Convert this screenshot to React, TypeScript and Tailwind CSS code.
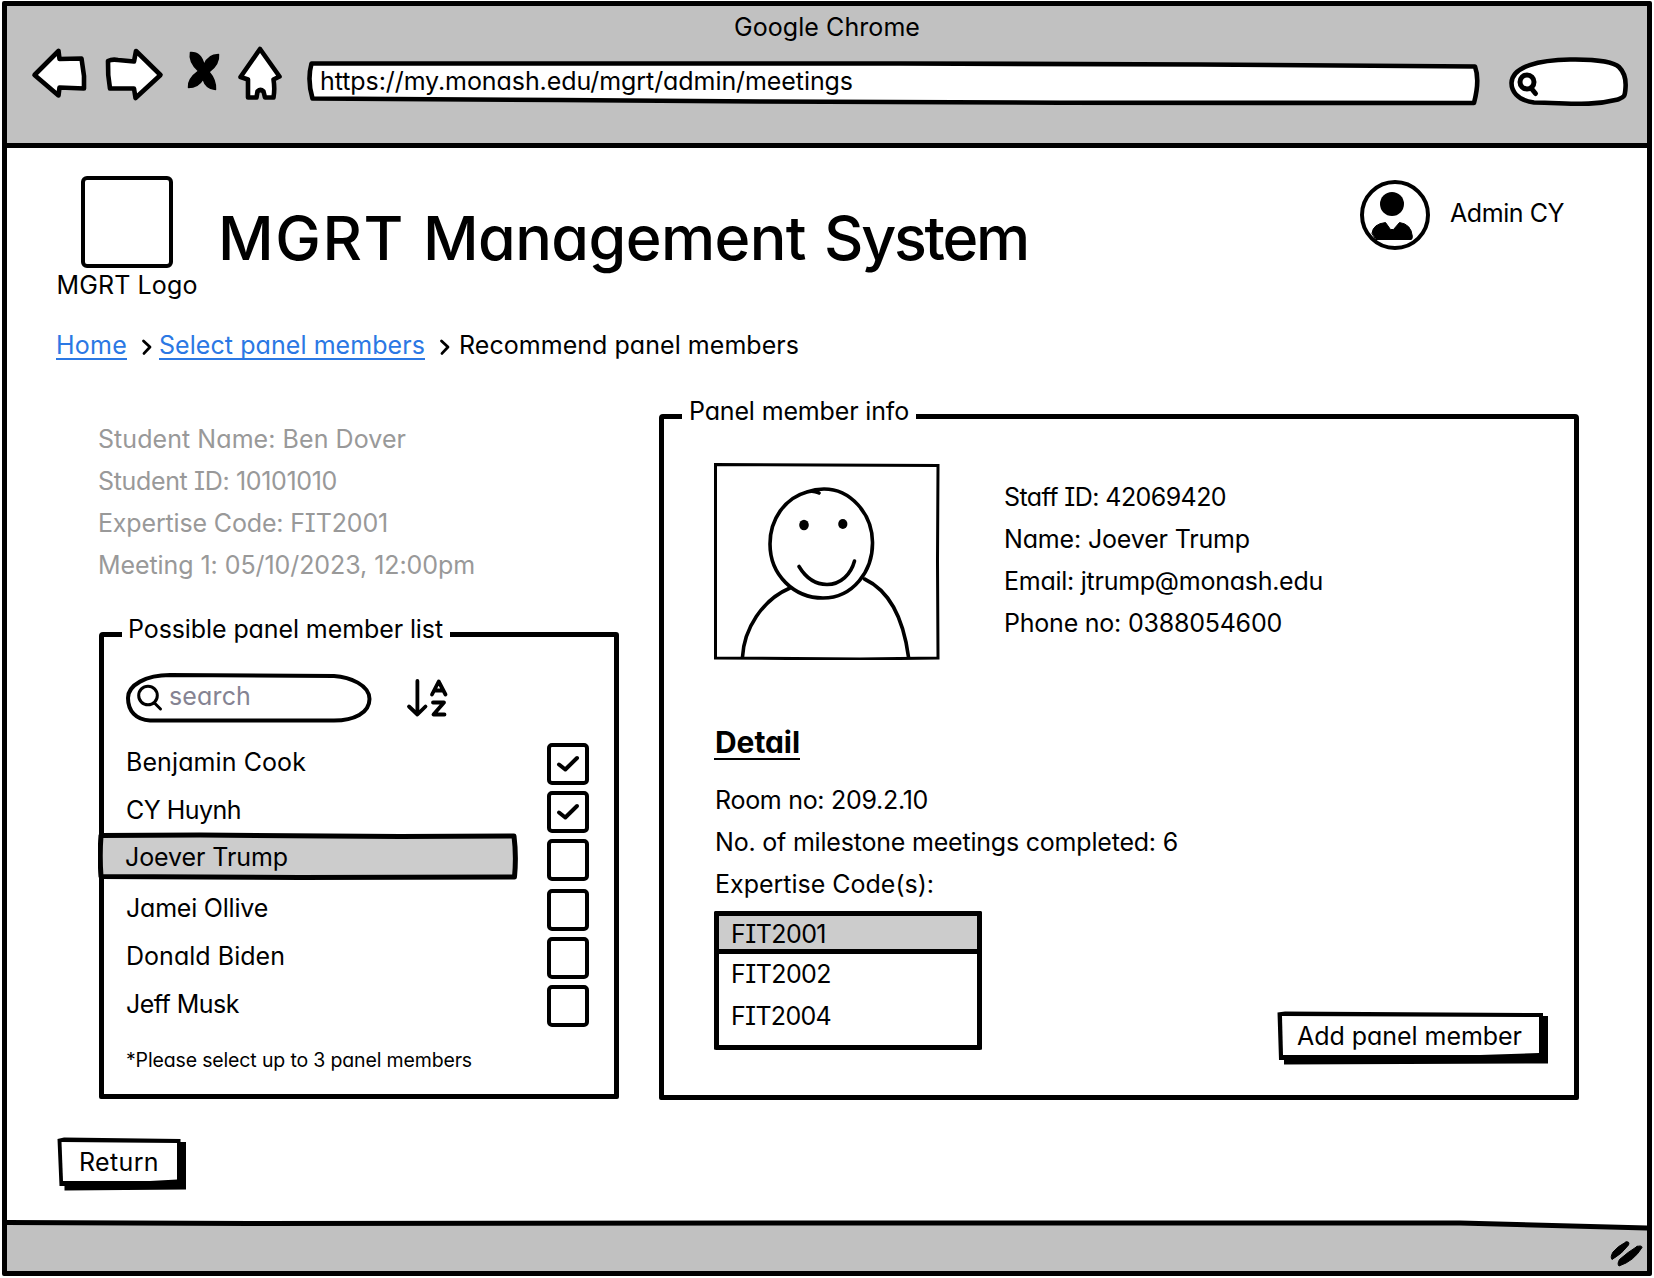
import { useLayoutEffect, useRef } from "react";
import type { ReactNode } from "react";

/** One line of text whose letter spacing is adjusted to fill the given width. */
function Fit({ w, children, className = "" }: { w: number; children: string; className?: string }) {
  const ref = useRef<HTMLSpanElement>(null);
  useLayoutEffect(() => {
    const el = ref.current;
    if (!el) return;
    el.style.letterSpacing = "0px";
    const natural = el.getBoundingClientRect().width;
    el.style.letterSpacing = `${(w - natural) / children.length}px`;
  }, [w, children]);
  return (
    <span ref={ref} className={`inline-block whitespace-nowrap ${className}`}>
      {children}
    </span>
  );
}

function Drawing({ box, className, children }: { box: string; className: string; children: ReactNode }) {
  return (
    <svg
      viewBox={box}
      className={`block shrink-0 ${className}`}
      fill="none"
      stroke="#000"
      strokeWidth={4.6}
      strokeLinecap="round"
      strokeLinejoin="round"
    >
      {children}
    </svg>
  );
}

const students = [
  { text: "Student Name: Ben Dover", w: 308 },
  { text: "Student ID: 10101010", w: 239 },
  { text: "Expertise Code: FIT2001", w: 290 },
  { text: "Meeting 1: 05/10/2023, 12:00pm", w: 377 },
];

const members = [
  { name: "Benjamin Cook", w: 180, checked: true },
  { name: "CY Huynh", w: 115, checked: true },
  { name: "Joever Trump", w: 163, checked: false, selected: true },
  { name: "Jamei Ollive", w: 142, checked: false },
  { name: "Donald Biden", w: 159, checked: false },
  { name: "Jeff Musk", w: 113, checked: false },
];

const staff = [
  { text: "Staff ID: 42069420", w: 222 },
  { text: "Name: Joever Trump", w: 246 },
  { text: "Email: jtrump@monash.edu", w: 319 },
  { text: "Phone no: 0388054600", w: 278 },
];

const details = [
  { text: "Room no: 209.2.10", w: 213 },
  { text: "No. of milestone meetings completed: 6", w: 463 },
  { text: "Expertise Code(s):", w: 219 },
];

function Checkbox({ checked }: { checked: boolean }) {
  return (
    <span className="flex h-[42px] w-[42px] items-center justify-center rounded-[5px] border-4 border-black bg-white">
      {checked && (
        <Drawing box="0 0 24 18" className="h-[18px] w-[24px]">
          <path d="M3 9.5 L9.300 14.500 L21 3" strokeWidth={4} />
        </Drawing>
      )}
    </span>
  );
}

function Chevron({ className }: { className: string }) {
  return (
    <Drawing box="0 0 12 18" className={`h-[18px] w-[12px] ${className}`}>
      <path d="M2.5 3 L9 9 L3 15.4" strokeWidth={2.8} />
    </Drawing>
  );
}

function Header() {
  return (
    <header className="h-[142px] shrink-0 border-b-[5px] border-black bg-[#c1c1c1]">
      <div className="h-[38px] pt-[6px] text-center">
        <Fit w={186}>Google Chrome</Fit>
      </div>
      <div className="flex pl-[21px]">
        <Drawing box="28 44 68 66" className="h-[66px] w-[68px]">
          <path fill="#fff" d="M34.5 75 L58.5 51 L59.5 59 L81.5 58.5 L84 76 L84 88.5 L59.5 87.5 L58.5 95.5 Z" />
        </Drawing>
        <Drawing box="96 44 80 66" className="h-[66px] w-[80px]">
          <path fill="#fff" d="M108 61 Q112 59 118 60 L134 61.5 L136 51 L160.5 75 L135.5 98 L134 88.5 L110 88.5 Q107.5 75 108 61 Z" />
        </Drawing>
        <Drawing box="176 44 56 66" className="h-[66px] w-[56px]">
          <path
            fill="#000"
            strokeWidth={1.5}
            d="M190.5 52.5 Q201 52 204 65 Q208 54.5 218.5 54.5 Q219.5 64 209 72 Q216 80 215.5 89.5 Q206 89 203 79 Q198 87.5 188.5 87.5 Q187.5 79 198.5 71 Q188.5 62 190.5 52.5 Z"
          />
        </Drawing>
        <Drawing box="232 44 72 66" className="h-[66px] w-[72px]">
          <path
            fill="#fff"
            d="M260 49 L279.5 76.5 L273.5 79.5 Q275 89 273.5 97.5 L265 97.5 L263.5 91.5 Q260.5 88.5 257.5 91.5 L256.5 97.5 L248 97.5 L248 79.5 L240.5 77 Z"
          />
        </Drawing>
        <div className="relative h-[66px] w-[1180px]">
          <Drawing box="304 44 1180 66" className="h-[66px] w-[1180px]">
            <path
              fill="#fff"
              d="M311.5 63.5 L900 63.5 L1200 64.5 L1475 66.5 Q1480 80 1474 103 L1060 102.7 L760 101.5 L560 100 L312.5 98.5 Q307 80 311.5 63.5 Z"
            />
          </Drawing>
          <div className="absolute left-[16px] top-[22px]">
            <Fit w={533}>https://my.monash.edu/mgrt/admin/meetings</Fit>
          </div>
        </div>
        <Drawing box="1484 44 160 66" className="h-[66px] w-[160px]">
          <path
            fill="#fff"
            d="M1534 102.5 C1516 100 1511.5 90 1511.5 83 C1512 66 1540 60 1570 59.5 C1600 59 1615 63 1619 67 C1625 73 1626 82 1625.5 88 C1625 97 1624 97 1618 99.5 C1590 106.5 1570 103 1534 102.5 Z"
          />
          <circle cx="1527" cy="82" r="7" strokeWidth={5} />
          <path d="M1531 88 L1535.5 93.5" strokeWidth={5} />
        </Drawing>
      </div>
    </header>
  );
}

function Brand() {
  return (
    <div className="flex h-[181px] pl-[50px]">
      <div className="flex w-[140px] flex-col items-center pt-[28px]">
        <div className="h-[92px] w-[92px] rounded-[6px] border-4 border-black" />
        <div className="mt-[2px]">
          <Fit w={141}>MGRT Logo</Fit>
        </div>
      </div>
      <h1 className="ml-[21px] mt-[54px] flex text-[61px] leading-[72px] font-medium">
        <Fit w={187}>MGRT</Fit>
        <Fit w={383} className="ml-[18px]">Management</Fit>
        <Fit w={204} className="ml-[18px]">System</Fit>
      </h1>
      <div className="ml-[331px] mt-[31px] flex items-start">
        <Drawing box="1359 179 72 72" className="h-[72px] w-[72px]">
          <circle cx="1395" cy="215" r="33" strokeWidth={4} />
          <circle cx="1392" cy="204" r="12" fill="#000" stroke="none" />
          <path
            fill="#000"
            strokeWidth={1}
            d="M1376 239.5 L1411 239.5 Q1412.5 239.5 1412.3 236 Q1411 224 1399.5 222.5 L1393.5 229.5 L1390.5 229.5 L1385.5 222.5 Q1373 224 1372 233 Z"
          />
        </Drawing>
        <div className="ml-[19px] mt-[19px]">
          <Fit w={114}>Admin CY</Fit>
        </div>
      </div>
    </div>
  );
}

function Breadcrumb() {
  return (
    <nav className="flex h-[31px] pl-[49px]">
      <a className="h-[31px] w-[71px] border-b-2 border-[#2b78e4] pt-px text-[#2b78e4]">
        <Fit w={71}>Home</Fit>
      </a>
      <Chevron className="ml-[14px] mt-[9px]" />
      <a className="ml-[6px] h-[31px] w-[266px] border-b-2 border-[#2b78e4] pt-px text-[#2b78e4]">
        <Fit w={266}>Select panel members</Fit>
      </a>
      <Chevron className="ml-[14px] mt-[9px]" />
      <span className="ml-[8px] pt-px">
        <Fit w={340}>Recommend panel members</Fit>
      </span>
    </nav>
  );
}

function MemberList() {
  return (
    <section className="relative mt-[46px] flex h-[467px] w-[520px] flex-col rounded-[2px] rounded-tl-[4px] rounded-tr-[3px] border-[5px] border-black pl-[22px]">
      <div className="absolute -top-[23px] left-[18px] w-[328px] bg-white pl-[6px]">
        <Fit w={315}>Possible panel member list</Fit>
      </div>
      <div className="mt-[36px] flex h-[50px]">
        <div className="relative h-[50px] w-[246px]">
          <Drawing box="126 672 246 50" className="h-[50px] w-[246px]">
            <path
              fill="#fff"
              strokeWidth={4}
              d="M170 674 L334 675 C350 676 369.5 684 369.5 698 C369.5 712 354 719.5 334 719.5 L150 719.5 C136 719 128 710 128 697 C128 684 146 674 170 674 Z"
            />
            <circle cx="148" cy="694.5" r="9.3" strokeWidth={3} />
            <path d="M154.5 702 L160.5 708" strokeWidth={3} />
          </Drawing>
          <div className="absolute left-[43px] top-[8px] text-[#858392]">
            <Fit w={82}>search</Fit>
          </div>
        </div>
        <Drawing box="406 677 44 42" className="ml-[34px] mt-[4px] h-[42px] w-[44px]">
          <path
            strokeWidth={3.8}
            d="M417.4 681 V714 M409 706.5 L417.4 714.5 L425.5 706.5 M432 694.5 L438.700 681.500 L445.500 694.500 M434.500 690.500 H443 M433 702.500 H444 L433.500 714.500 H444.500"
          />
        </Drawing>
      </div>
      <ul className="mt-[20px] pr-[25px]">
        {members.map((m, i) => (
          <li key={m.name} className={`flex h-[48px] items-start justify-between ${i === 3 ? "mt-[2px]" : ""}`}>
            {m.selected ? (
              <div className="relative z-10 -ml-[28px] -mt-[7px] h-[48px] w-[420px] pl-[27px] pt-[10px]">
                <Drawing box="98 832 420 48" className="absolute left-0 top-0 h-[48px] w-[420px]">
                  <path
                    fill="#ccc"
                    strokeWidth={5}
                    d="M101 835.5 L200 835 L400 836.5 L514 836 Q516.5 856 514.5 877 L300 877.5 L101 876.5 Q99.5 856 101 835.5 Z"
                  />
                </Drawing>
                <div className="relative">
                  <Fit w={m.w}>{m.name}</Fit>
                </div>
              </div>
            ) : (
              <div className="pt-[4px]">
                <Fit w={m.w}>{m.name}</Fit>
              </div>
            )}
            <Checkbox checked={m.checked} />
          </li>
        ))}
      </ul>
      <p className="mt-[15px] text-[19.5px] leading-[24px]">
        <Fit w={346}>*Please select up to 3 panel members</Fit>
      </p>
    </section>
  );
}

function Portrait() {
  return (
    <Drawing box="714 462 226 197" className="h-[197px] w-[226px]">
      <g strokeWidth={3}>
        <path d="M715.5 463.5 L938 464.5 L937.5 560 L938 657 L860 658 L715.5 657 Z" strokeLinejoin="miter" />
        <path
          strokeWidth={3.6}
          d="M819 492 Q813 489 807 491 C785 497 770 518 770 543 C770 574 794 597 823 597 C853 597 873 570 872.5 541 C872 512 850 488 824 488 Q815 488 807 491"
        />
        <path strokeWidth={3.6} d="M790 587 C762 599 744 628 742.5 656" />
        <path strokeWidth={3.6} d="M864.5 578 C892 591 904 622 908.5 656" />
        <path strokeWidth={3.6} d="M799 565.5 C806 577 816 583.5 827 583.5 C841 583.5 851 573 854.5 560" />
        <ellipse cx="804" cy="524" rx="4.8" ry="5.2" fill="#000" stroke="none" />
        <ellipse cx="842.8" cy="523" rx="4.6" ry="5" fill="#000" stroke="none" />
      </g>
    </Drawing>
  );
}

function InfoPanel() {
  return (
    <section className="relative flex h-[686px] w-[920px] flex-col rounded-[2px] rounded-t-[4px] border-[5px] border-black pl-[50px]">
      <div className="absolute -top-[23px] left-[18px] w-[234px] bg-white pl-[7px]">
        <Fit w={220}>Panel member info</Fit>
      </div>
      <div className="mt-[44px] flex h-[197px]">
        <Portrait />
        <div className="ml-[64px] mt-[13px] leading-[42px]">
          {staff.map((s) => (
            <div key={s.text} className="h-[42px]">
              <Fit w={s.w}>{s.text}</Fit>
            </div>
          ))}
        </div>
      </div>
      <h2 className="mt-[64px] h-[36px] w-[86px] border-b-2 border-black text-[30px] leading-[36px] font-bold">
        <Fit w={86} className="pl-px">Detail</Fit>
      </h2>
      <div className="mt-[19px] pl-px leading-[42px]">
        {details.map((d) => (
          <div key={d.text} className="h-[42px]">
            <Fit w={d.w}>{d.text}</Fit>
          </div>
        ))}
      </div>
      <div className="mt-[6px] flex h-[154px] justify-between pr-[25px]">
        <div className="h-[139px] w-[268px] rounded-[2px] border-[5px] border-t-0 border-black">
          <div className="-mx-[5px] h-[43px] rounded-t-[2px] border-[5px] border-black bg-[#ccc] pl-[12px] pt-[3px]">
            <Fit w={95}>FIT2001</Fit>
          </div>
          <div className="mt-[5px] pl-[12px]">
            <Fit w={100}>FIT2002</Fit>
          </div>
          <div className="mt-[12px] pl-[12px]">
            <Fit w={100}>FIT2004</Fit>
          </div>
        </div>
        <button className="relative h-[54px] w-[272px] self-end text-left">
          <Drawing box="1277 1010 272 54" className="h-[54px] w-[272px]">
            <path stroke="none" fill="#000" d="M1277.5 1011.5 L1285 1010.5 L1543 1012 V1015 H1548 V1062.5 L1284 1063.5 V1059 H1279 Z" />
            <path stroke="none" fill="#fff" d="M1282 1015 L1539 1016 V1052 L1480 1054 H1283 Z" />
          </Drawing>
          <span className="absolute left-[20px] top-[10px]">
            <Fit w={225}>Add panel member</Fit>
          </span>
        </button>
      </div>
    </section>
  );
}

export default function App() {
  return (
    <div className="h-[1278px] w-[1654px] overflow-hidden bg-white pl-[2px] pt-px font-['Inter','Lato',sans-serif] text-[25px] leading-[30px] font-normal text-black [font-feature-settings:'cv11','cv08']">
      <div className="flex h-[1275px] w-[1650px] flex-col rounded-[2px] border-[5px] border-black">
        <Header />
        <main className="h-[1071px] shrink-0">
          <Brand />
          <Breadcrumb />
          <div className="mt-[54px] flex">
            <div className="ml-[92px] w-[560px]">
              <div className="-ml-px pt-[4px] leading-[42px] text-[#999]">
                {students.map((s) => (
                  <div key={s.text} className="h-[42px]">
                    <Fit w={s.w}>{s.text}</Fit>
                  </div>
                ))}
              </div>
              <MemberList />
            </div>
            <InfoPanel />
          </div>
          <button className="relative ml-[50px] mt-[37px] block h-[54px] w-[130px] text-left">
            <Drawing box="57 1136 130 54" className="h-[54px] w-[130px]">
              <path stroke="none" fill="#000" d="M57.5 1138 L64 1136.5 L180.5 1138 V1141 H186 V1188.5 L64.5 1189.5 V1185 H59.5 Z" />
              <path stroke="none" fill="#fff" d="M61.5 1141 L177 1142 V1178.5 L150 1180 H63 Z" />
            </Drawing>
            <span className="absolute left-[22px] top-[10px]">
              <Fit w={80}>Return</Fit>
            </span>
          </button>
        </main>
        <footer className="h-[52px] shrink-0">
          <Drawing box="7 1218 1640 52" className="h-[52px] w-[1640px]">
            <path stroke="none" fill="#c1c1c1" d="M7 1222 L1460 1222 L1647 1227 V1271 H7 Z" />
            <path strokeWidth={5} d="M5 1221.5 L250 1222.5 L800 1222 L1460 1222 L1650 1227" />
            <path strokeWidth={1} fill="#000" d="M1626 1241 Q1630 1240 1628.5 1244 Q1622 1253 1612 1258.5 Q1610 1256 1613 1251 Q1618 1245 1626 1241 Z" />
            <path strokeWidth={1} fill="#000" d="M1637 1245.5 Q1642 1244 1642 1246.5 Q1634 1260 1619 1265 Q1617 1263 1619.5 1258.5 Q1628 1251 1637 1245.5 Z" />
          </Drawing>
        </footer>
      </div>
    </div>
  );
}
